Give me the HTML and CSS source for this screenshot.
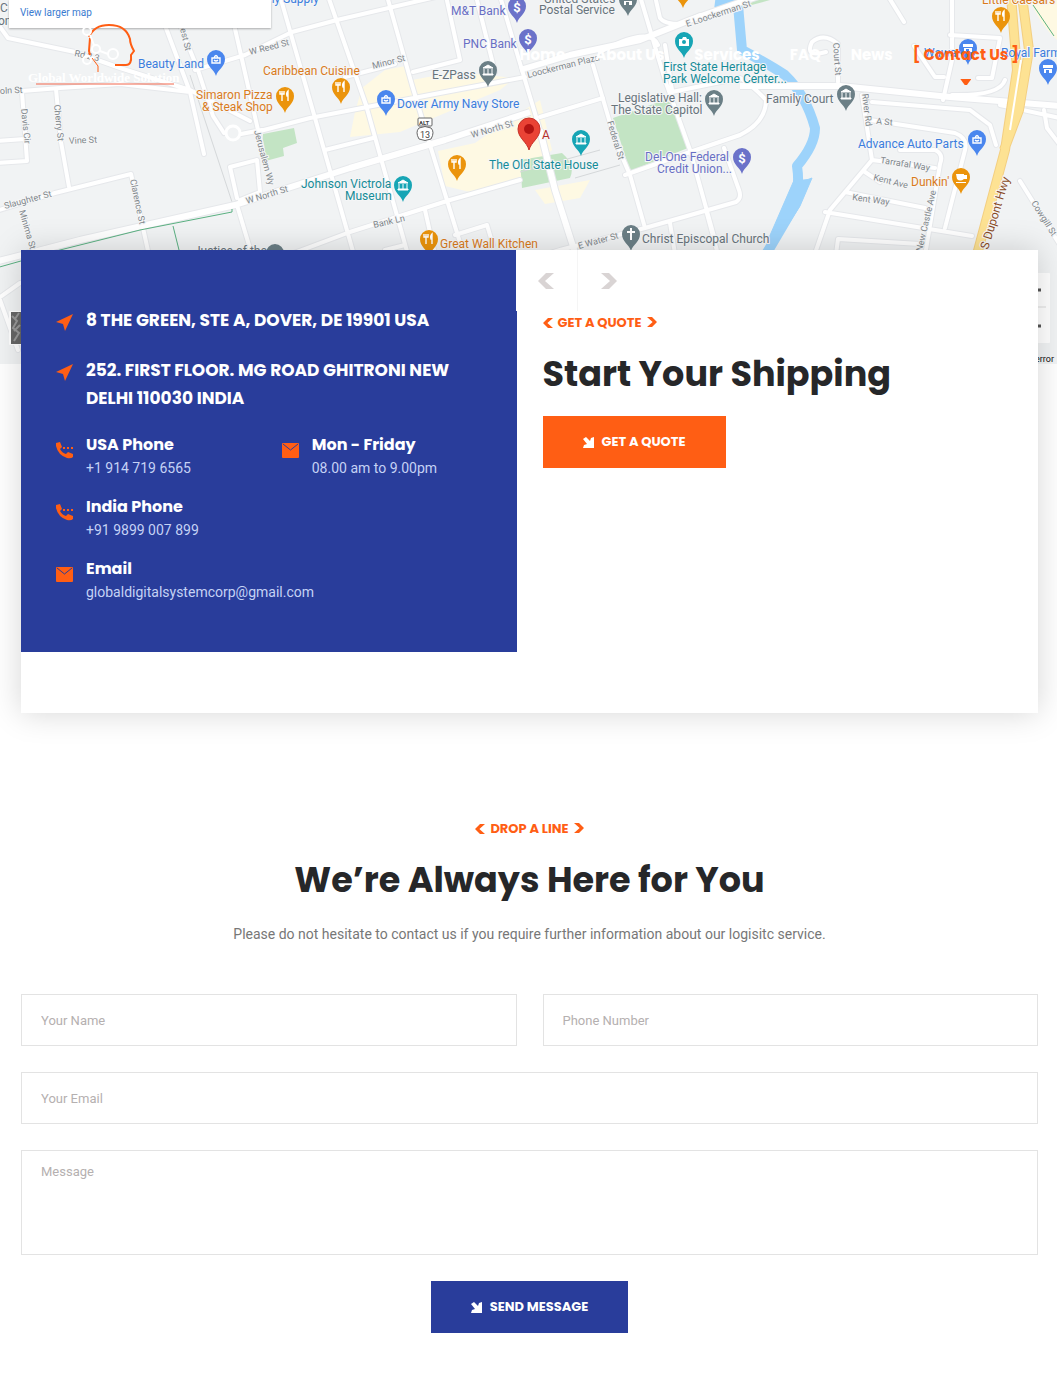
FILE: index.html
```html
<!DOCTYPE html>
<html lang="en">
<head>
<meta charset="utf-8">
<meta name="viewport" content="width=device-width, initial-scale=1">
<title>Contact Us</title>
<link rel="stylesheet" href="styles.css">
</head>
<body>
<div class="hero">
<svg class="map" viewBox="0 0 1057 364" preserveAspectRatio="xMidYMin slice" role="img" aria-label="Map of Dover">
  <defs>
    <g id="roads" fill="none" stroke-linejoin="round" stroke-linecap="round">
      <path d="M-5 20L8 38L75 52L120 68L190 90L250 121M22 91L60 88L120 84L190 92M22 92L27 161L-4 163M-4 141L25 139M56 89L61 142L69 187M-4 211L55 193L131 174L143 228L150 260M163 20L190 92L204 154M178 20L198 70L213 116L224 133M241 134L262 130M233 20L258 130L262 150M195 70L245 55L292 32L337 20L440 -4M237 198L230 167L257 160L260 192L240 200M237 205L254 262"/>
      <path d="M280 -4L315 118L356 262M328 -4L366 105L410 262M387 -4L412 85L430 145L466 262M345 77L395 64M413 72L460 60L446 -4M476 -4L495 72M500 -4L522 70L540 130L555 190L578 262M325 150L373 138M260 131L310 118L440 93L525 77M270 262L350 232L450 200L520 180M425 210L434 250M455 235L487 225L493 245M385 250L405 245"/>
      <path d="M540 117L603 98M593 65L615 140L630 175L645 228M640 -4L665 80L690 150L715 240M520 262L560 250L645 228L736 202Q742 198 739 190L724 148M625 175L690 152L740 135Q766 122 766 100Q752 85 740 78L672 92M655 -4L660 18Q664 24 680 24L700 15M600 52Q650 25 658 45M670 223L676 260M706 210L720 262M665 45L672 90"/>
      <path d="M888 -4L904 22M952 -4L952 60L943 100M950 35L1000 38L992 78L978 78M914 46L935 77L944 77M952 95Q1000 96 1005 80M826 52Q804 58 812 42Q824 32 838 44L838 82M862 95L872 160L830 210L812 262M870 120L955 133Q968 138 965 150L945 228M872 102L970 110L990 125L996 145M872 160L935 168M900 150L935 150Q944 154 940 164L924 262M865 172L880 182M845 192L925 208M825 212L972 236M835 262L838 239L920 244M1020 181L1060 245M1044 110L1047 128L1060 145M1000 105L1060 118M-4 300L20 283M0 300L18 350"/>
    </g>
    <g id="main-roads" fill="none" stroke-linejoin="round">
      <path d="M-5 262L80 240L235 205L350 168L445 140L530 112M520 70L570 55L640 40L690 20L770 -8M740 86L840 86L950 97L1060 106M540 130L555 190L578 262"/>
    </g>
    <path id="pin" d="M0 16C-2 9 -9 7 -9 -1A9 9 0 1 1 9 -1C9 7 2 9 0 16Z"/>
    <path id="fork" d="M-3 -5V5M-5 -5V-2H-1V-5M3 5V-5Q1 -3 2 0H3" fill="none" stroke="#fff" stroke-width="1.4"/>
    <path id="bag" d="M-4 -2H4V3H-4ZM-2 -2Q0 -7 2 -2M-2 0Q0 2 2 0" fill="none" stroke="#fff" stroke-width="1.4"/>
    <path id="bank" d="M-5 -3L0 -6L5 -3ZM-5 3H5V4H-5ZM-4 -2V3M0 -2V3M4 -2V3" fill="#fff" stroke="#fff"/>
    <path id="shop" d="M-5 -4H5V-1H-5ZM-4 0H4V4H1V1H-2V4H-4Z" fill="#fff"/>
  </defs>
  <rect width="1057" height="364" fill="#f1f3f4"/>
  <g fill="#fef9e3">
    <path d="M385 70L405 66L412 80L455 72L515 78L500 90L400 132L350 137L355 112L362 88Z"/>
    <path d="M438 151L475 143L505 122L540 100L552 150L520 180L470 192L445 186Z"/>
    <path d="M535 190L590 180L580 198L545 204ZM1030 0H1057V40Q1040 25 1030 0Z"/>
  </g>
  <g fill="#c3e4c4">
    <path d="M263 134L294 128L297 143L283 148L284 156L262 162Z"/>
    <path d="M613 118L665 100L674 105L688 148L630 171Z"/>
    <path d="M520 160L562 153Q576 165 570 178L522 188ZM745 0H770L748 6Z"/>
  </g>
  <g fill="none" stroke="#9dd3fb">
    <path d="M715 2L738 5L742 50Q770 65 785 75Q806 95 815 128Q815 145 797 166Q800 185 795 205L765 256" stroke-width="10" stroke-linejoin="round"/>
    <path d="M795 178Q804 182 812 178L800 206L775 245L768 240Z" fill="#9dd3fb"/>
  </g>
  <path d="M190 75L234 208M600 150L520 172M575 178L620 165" fill="none" stroke="#d5d8da"/>
  <use href="#roads" stroke="#e6e8eb" stroke-width="6"/>
  <use href="#main-roads" stroke="#e6e8eb" stroke-width="8"/>
  <use href="#roads" stroke="#fff" stroke-width="4"/>
  <use href="#main-roads" stroke="#fff" stroke-width="6"/>
  <circle cx="233" cy="133" r="7" fill="#f1f3f4" stroke="#fff" stroke-width="3"/>
  <g fill="none" stroke="#5bb182"><path d="M-4 268L60 250L140 230L232 212V209M173 226L180 254M1033 5L1054 36"/></g>
  <g fill="none" stroke-linejoin="round">
    <path d="M1011 -4L1017 70L1005 150L975 262M1022 -4L1029 50L1019 110L1004 150" stroke="#f3cf82" stroke-width="10"/>
    <path d="M1011 -4L1017 70L1005 150L975 262M1022 -4L1029 50L1019 110L1004 150" stroke="#fde293" stroke-width="8"/>
    <path d="M1021 60L1010 130" stroke="#fff" stroke-width="2"/>
  </g>

  <g class="street">
    <text transform="translate(74 56) rotate(12)">Rd 2 3</text>
    <text transform="translate(0 94) rotate(-3)">oln St</text>
    <text transform="translate(21 109) rotate(84)">Davis Cir</text>
    <text transform="translate(54 105) rotate(84)">Cherry St</text>
    <text x="69" y="144" transform="rotate(-3 69 144)">Vine St</text>
    <text transform="translate(5 209) rotate(-15)">Slaughter St</text>
    <text transform="translate(130 180) rotate(78)">Clarence St</text>
    <text transform="translate(19 211) rotate(74)">Minima St</text>
    <text transform="translate(180 29) rotate(76)">est St</text>
    <text transform="translate(250 55) rotate(-14)">W Reed St</text>
    <text transform="translate(254 131) rotate(75)">Jerusalem Wy</text>
    <text transform="translate(247 204) rotate(-17)">W North St</text>
    <text transform="translate(373 69) rotate(-14)">Minor St</text>
    <text transform="translate(472 138) rotate(-16)">W North St</text>
    <text transform="translate(374 228) rotate(-13)">Bank Ln</text>
    <text transform="translate(528 78) rotate(-14)">Loockerman Plaza</text>
    <text transform="translate(687 27) rotate(-18)">E Loockerman St</text>
    <text transform="translate(607 122) rotate(73)">Federal St</text>
    <text transform="translate(579 249) rotate(-15)">E Water St</text>
    <text transform="translate(833 43) rotate(86)">Court St</text>
    <text transform="translate(862 94) rotate(83)">River Rd</text>
    <text transform="translate(876 124) rotate(5)">A St</text>
    <text transform="translate(880 163) rotate(9)">Tarrafal Way</text>
    <text transform="translate(873 180) rotate(14)">Kent Ave</text>
    <text transform="translate(852 200) rotate(8)">Kent Way</text>
    <text transform="translate(922 252) rotate(-77)">New Castle Ave</text>
    <text transform="translate(1031 203) rotate(58)">Cowgill St</text>
    <text class="highway" transform="translate(988 250) rotate(-73)">S Dupont Hwy</text>
  </g>

  <g class="poi blue">
    <text x="138" y="68">Beauty Land</text><text x="397" y="108">Dover Army Navy Store</text>
    <text x="858" y="148">Advance Auto Parts</text><text x="924" y="57">Wawa</text><text x="1001" y="57">Royal Farms</text>
    <text x="252" y="3">Army Supply</text>
  </g>
  <g class="poi orange">
    <text x="263" y="75">Caribbean Cuisine</text><text x="196" y="99">Simaron Pizza</text><text x="202" y="111">&amp; Steak Shop</text>
    <text x="440" y="248">Great Wall Kitchen</text><text x="911" y="186">Dunkin'</text><text x="982" y="4">Little Caesars</text>
  </g>
  <g class="poi teal">
    <text x="489" y="169">The Old State House</text><text x="301" y="188">Johnson Victrola</text><text x="345" y="200">Museum</text>
    <text x="663" y="71">First State Heritage</text><text x="663" y="83">Park Welcome Center...</text>
  </g>
  <g class="poi gray">
    <text x="432" y="79">E-ZPass</text><text x="544" y="3">United States</text><text x="539" y="14">Postal Service</text>
    <text x="618" y="102">Legislative Hall:</text><text x="611" y="114">The State Capitol</text><text x="766" y="103">Family Court</text>
    <text x="642" y="243">Christ Episcopal Church</text><text x="194" y="255">Justice of the</text><text x="0" y="12">C</text><text x="-2" y="25">on</text>
  </g>
  <g class="poi violet">
    <text x="451" y="15">M&amp;T Bank</text><text x="463" y="48">PNC Bank</text><text x="645" y="161">Del-One Federal</text><text x="657" y="173">Credit Union...</text>
  </g>

  <g fill="#4a86ee"><use href="#pin" x="216" y="60"/><use href="#pin" x="386" y="100"/><use href="#pin" x="977" y="140"/><use href="#pin" x="968" y="49"/><use href="#pin" x="1048" y="69"/></g>
  <g fill="#eb940c"><use href="#pin" x="285" y="97"/><use href="#pin" x="341" y="88"/><use href="#pin" x="457" y="165"/><use href="#pin" x="429" y="240"/><use href="#pin" x="1001" y="17"/><use href="#pin" x="961" y="178"/><use href="#pin" x="683" y="-8"/></g>
  <g fill="#17a5b5"><use href="#pin" x="403" y="186"/><use href="#pin" x="581" y="140"/><use href="#pin" x="684" y="42"/></g>
  <g fill="#6b7f86"><use href="#pin" x="488" y="71"/><use href="#pin" x="714" y="100"/><use href="#pin" x="846" y="95"/><use href="#pin" x="631" y="235"/><use href="#pin" x="628" y="0"/><use href="#pin" x="275" y="254"/></g>
  <g fill="#6b72c9"><use href="#pin" x="517" y="7"/><use href="#pin" x="528" y="39"/><use href="#pin" x="742" y="158"/></g>
  <use href="#bag" x="216" y="60"/><use href="#bag" x="386" y="100"/><use href="#bag" x="977" y="140"/>
  <use href="#shop" x="968" y="48"/><use href="#shop" x="1048" y="69"/>
  <use href="#fork" x="285" y="96"/><use href="#fork" x="341" y="87"/><use href="#fork" x="457" y="164"/><use href="#fork" x="429" y="239"/><use href="#fork" x="1001" y="16"/>
  <use href="#bank" x="403" y="186"/><use href="#bank" x="581" y="140"/><use href="#bank" x="488" y="71"/><use href="#bank" x="714" y="100"/><use href="#bank" x="846" y="95"/><use href="#shop" x="628" y="1"/>
  <path d="M679 39H682L683 37H686L687 39H689V46H679Z" fill="#fff"/><circle cx="684" cy="42" r="2" fill="#17a5b5"/>
  <path d="M956 174H964V175H967V179H964Q960 182 957 179ZM956 182H966V183H956Z" fill="#fff"/>
  <path d="M631 228V240M627 232H635" stroke="#fff" stroke-width="2"/>
  <g class="dollar"><text x="517" y="12">$</text><text x="528" y="44">$</text><text x="742" y="163">$</text></g>
  <path d="M529 150C527 142 518 138 518 129A11 11 0 0 1 540 129C540 138 531 142 529 150Z" fill="#ea4335" stroke="#c5322a"/>
  <circle cx="529" cy="129" r="5" fill="#b31412"/>
  <text x="542" y="139" class="marker">A</text>
  <rect x="418" y="118" width="14" height="8" rx="1" fill="#fff" stroke="#666"/><text x="419" y="125" class="alt">ALT</text>
  <path d="M419 128Q425 125 431 128Q435 132 431 139Q425 142 419 139Q415 132 419 128Z" fill="#fff" stroke="#666"/><text x="420" y="138" class="shield">13</text>

  <g><rect x="9" y="311" width="40" height="34" rx="1" fill="#fff"/><rect x="11" y="312" width="38" height="32" fill="#666"/><path d="M12 316L17 321L13 328L19 333L14 341M19 313L15 319M20 325L14 331" stroke="#999" stroke-width="2" fill="none"/></g>
  <rect x="1010" y="273" width="40" height="70" rx="1" fill="#fff"/><path d="M1015 307H1046" stroke="#ddd"/><path d="M1024 290H1041M1024 326H1041" stroke="#555" stroke-width="3"/>
  <text x="1054" y="362" class="report">Report a map error</text>
</svg>
<a class="larger" href="#">View larger map</a>
<header class="header">
  <a class="logo" href="#" aria-label="Global Worldwide Solution">
    <svg width="160" height="66" viewBox="0 0 160 66">
      <path d="M61 15Q66 3 81 3Q98 3 102 17Q102 22 106 29L103 33Q104 43 98 43H87" fill="none" stroke="#ff5e14" stroke-width="2"/>
      <path d="M62 16L61 29L62 33" fill="none" stroke="#ff5e14" stroke-width="2"/>
      <path d="M64 36L70 44V50" fill="none" stroke="#ff5e14"/>
      <g fill="none" stroke="#fff" stroke-width="2"><circle cx="59" cy="9" r="4"/><circle cx="68" cy="27" r="4"/><circle cx="85" cy="32" r="5"/><circle cx="59" cy="38" r="4"/><path d="M72 29L80 32M62 13L66 23"/></g>
      <text x="0" y="60" class="logo-text">Global Worldwide Solution</text>
      <path d="M8 62H146" stroke="#f2674d"/>
    </svg>
  </a>
  <nav class="nav">
    <a href="#">Home</a><a href="#">About Us</a><a href="#">Services</a><a href="#">FAQ</a><a href="#">News</a><a class="active" href="#">[ Contact Us ]</a>
  </nav>
</header>
</div>

<main class="container">
  <section class="card">
    <div class="info">
      <div class="item address"><svg class="icon" viewBox="0 0 17 17"><path d="M17 0L9 17L7 10L0 8Z"/></svg><h4>8 THE GREEN, STE A, DOVER, DE 19901 USA</h4></div>
      <div class="item address"><svg class="icon" viewBox="0 0 17 17"><path d="M17 0L9 17L7 10L0 8Z"/></svg><h4>252. FIRST FLOOR. MG ROAD GHITRONI NEW DELHI 110030 INDIA</h4></div>
      <div class="contacts">
        <div class="item"><svg class="icon" viewBox="0 0 17 17"><path d="M0 1L4 0L6 5L4 7Q6 11 10 12L12 10L17 12V15Q15 17 11 16Q2 13 0 4ZM7 5h2v2h-2zM11 5h2v2h-2zM15 5h2v2h-2z"/></svg><div><h5>USA Phone</h5><a href="tel:+19147196565">+1 914 719 6565</a></div></div>
        <div class="item"><svg class="icon" viewBox="0 0 17 17"><rect y="1" width="17" height="15" rx="1"/><path class="flap" d="M1 2L8.500 8L16 2"/></svg><div><h5>Mon - Friday</h5><p>08.00 am to 9.00pm</p></div></div>
        <div class="item"><svg class="icon" viewBox="0 0 17 17"><path d="M0 1L4 0L6 5L4 7Q6 11 10 12L12 10L17 12V15Q15 17 11 16Q2 13 0 4ZM7 5h2v2h-2zM11 5h2v2h-2zM15 5h2v2h-2z"/></svg><div><h5>India Phone</h5><a href="tel:+919899007899">+91 9899 007 899</a></div></div>
        <div class="item wide"><svg class="icon" viewBox="0 0 17 17"><rect y="1" width="17" height="15" rx="1"/><path class="flap" d="M1 2L8.500 8L16 2"/></svg><div><h5>Email</h5><a href="mailto:globaldigitalsystemcorp@gmail.com">globaldigitalsystemcorp@gmail.com</a></div></div>
      </div>
    </div>
    <div class="quote">
      <div class="arrows">
        <button type="button" aria-label="Previous"><svg viewBox="0 0 16 16"><path d="M8 0H16L7 8L16 16H8L0 8Z"/></svg></button>
        <button type="button" aria-label="Next"><svg viewBox="0 0 16 16"><path d="M0 0H8L16 8L8 16H0L9 8Z"/></svg></button>
      </div>
      <p class="eyebrow"><svg viewBox="0 0 16 16"><path d="M8 0H16L7 8L16 16H8L0 8Z"/></svg>GET A QUOTE<svg class="next" viewBox="0 0 16 16"><path d="M0 0H8L16 8L8 16H0L9 8Z"/></svg></p>
      <h2>Start Your Shipping</h2>
      <a class="button" href="#"><svg viewBox="0 0 11 11"><path d="M0 2L3 0L7 4L8 1L11 0V11H0L1 8L4 7Z"/></svg>GET A QUOTE</a>
    </div>
  </section>

  <section class="contact">
    <p class="eyebrow"><svg viewBox="0 0 16 16"><path d="M8 0H16L7 8L16 16H8L0 8Z"/></svg>DROP A LINE<svg class="next" viewBox="0 0 16 16"><path d="M0 0H8L16 8L8 16H0L9 8Z"/></svg></p>
    <h2>We’re Always Here for You</h2>
    <p class="lead">Please do not hesitate to contact us if you require further information about our logisitc service.</p>
    <form class="form">
      <input type="text" placeholder="Your Name" aria-label="Your Name">
      <input type="tel" placeholder="Phone Number" aria-label="Phone Number">
      <input class="full" type="email" placeholder="Your Email" aria-label="Your Email">
      <textarea class="full" placeholder="Message" aria-label="Message"></textarea>
      <button class="button send" type="submit"><svg viewBox="0 0 11 11"><path d="M0 2L3 0L7 4L8 1L11 0V11H0L1 8L4 7Z"/></svg>SEND MESSAGE</button>
    </form>
  </section>
</main>
</body>
</html>
```
FILE: styles.css
```css
* { box-sizing: border-box; }
body { margin: 0; background: #fff; color: #777; font: 14px/24px Roboto, sans-serif; }
h2, h4, h5, p { margin: 0; }
h2, h4, h5, .nav, .eyebrow, .button { font-family: Poppins, Inter, sans-serif; font-weight: 700; }
a { color: inherit; text-decoration: none; }

.hero { position: relative; height: 364px; overflow: hidden; }
.map { display: block; width: 100%; height: 100%; font-family: Roboto, sans-serif; }
.map text { paint-order: stroke; stroke: #f5f6f7; stroke-width: 2px; }
.street { font-size: 9px; fill: #80868b; }
.street .highway { font-size: 12px; fill: #8a4b25; }
.poi { font-size: 12px; }
.blue { fill: #3b7ddd; }
.orange { fill: #d97b1c; }
.teal { fill: #168c98; }
.gray { fill: #68747c; }
.violet { fill: #686fc4; }
.map .dollar text { fill: #fff; stroke: none; font-size: 13px; font-weight: 700; text-anchor: middle; }
.map .marker { fill: #b5302a; font-size: 12px; }
.map .alt { font-size: 6px; fill: #444; stroke: none; font-weight: 700; }
.map .shield { font-size: 9px; fill: #444; stroke: none; }
.map .report { font-size: 9px; fill: #111; stroke: none; text-anchor: end; }
.larger { position: absolute; top: 0; left: 9px; width: 262px; height: 28px; padding-left: 11px; background: #fff; color: #3a7bd0; font-size: 10px; line-height: 26px; box-shadow: 0 1px 2px rgba(0, 0, 0, .3); }

.header { position: absolute; top: 0; left: 0; right: 0; display: flex; justify-content: space-between; padding: 22px 38px 0 28px; }
.logo svg { display: block; overflow: visible; }
.logo-text { fill: #fff; font: 700 13px "Liberation Serif", serif; }
.nav { display: flex; gap: 30px; padding-top: 21px; color: #fff; font-size: 15px; line-height: 24px; }
.nav .active { display: flex; flex-direction: column; align-items: center; color: #ff5e14; margin-left: -10px; }
.nav .active::after { content: ""; width: 11px; height: 6px; margin-top: 12px; background: #ff5e14; clip-path: polygon(0 0, 100% 0, 60% 100%, 40% 100%); }

.container { margin: 0 19px 0 21px; }
.card { position: relative; display: grid; grid-template-columns: 1fr 1fr; column-gap: 26px; align-items: start; margin-top: -114px; padding-bottom: 61px; background: #fff; box-shadow: 0 0 30px rgba(0, 0, 0, .17); }
.info { padding: 56px 35px 48px; background: #293d9b; color: #fff; }
.item { display: flex; gap: 13px; }
.icon { flex: none; width: 17px; height: 17px; margin-top: 8px; fill: #ff5e14; }
.flap { fill: none; stroke: #293d9b; }
.address { margin-bottom: 22px; }
.address h4 { font-size: 17px; line-height: 28px; }
.contacts { display: grid; grid-template-columns: 1fr 1fr; column-gap: 26px; row-gap: 16px; }
.contacts h5 { font-size: 16px; line-height: 22px; }
.contacts a, .contacts p { color: #c5d2f5; }
.contacts .wide { grid-column: 1 / -1; }

.arrows { display: flex; width: 124px; height: 61px; margin-left: -27px; background: #fff; }
.arrows button { flex: 1; padding: 4px 0 0; border: 0; background: none; }
.arrows button + button { border-left: 1px solid #f5f5f5; }
.arrows svg { width: 16px; height: 16px; fill: #d9d4d4; }
.eyebrow { display: flex; align-items: center; gap: 5px; color: #ff5e14; font-size: 13px; line-height: 24px; }
.eyebrow svg { width: 10px; height: 10px; fill: #ff5e14; }
.eyebrow .next { margin-bottom: 2px; }
h2 { color: #262729; font-size: 35px; line-height: 44px; }
.quote h2 { margin: 17px 0 20px; }
.button { display: inline-flex; align-items: center; justify-content: center; gap: 8px; height: 52px; padding: 0 40px; border: 0; background: #ff5e14; color: #fff; font-size: 13px; }
.button svg { width: 11px; height: 11px; fill: #fff; }

.contact { display: flex; flex-direction: column; align-items: center; padding: 104px 0 65px; text-align: center; }
.contact h2 { margin: 17px 0 20px; }
.form { display: grid; grid-template-columns: 1fr 1fr; gap: 26px; width: 100%; margin-top: 48px; }
.form input, .form textarea { width: 100%; height: 52px; padding: 0 19px; border: 1px solid #e3e3e3; border-radius: 0; background: #fff; font: 13px/20px Roboto, sans-serif; }
.form textarea { display: block; height: 105px; padding-top: 11px; resize: none; }
.form ::placeholder { color: #b5b0b0; opacity: 1; }
.full { grid-column: 1 / -1; }
.send { grid-column: 1 / -1; justify-self: center; background: #293d9b; }
```
